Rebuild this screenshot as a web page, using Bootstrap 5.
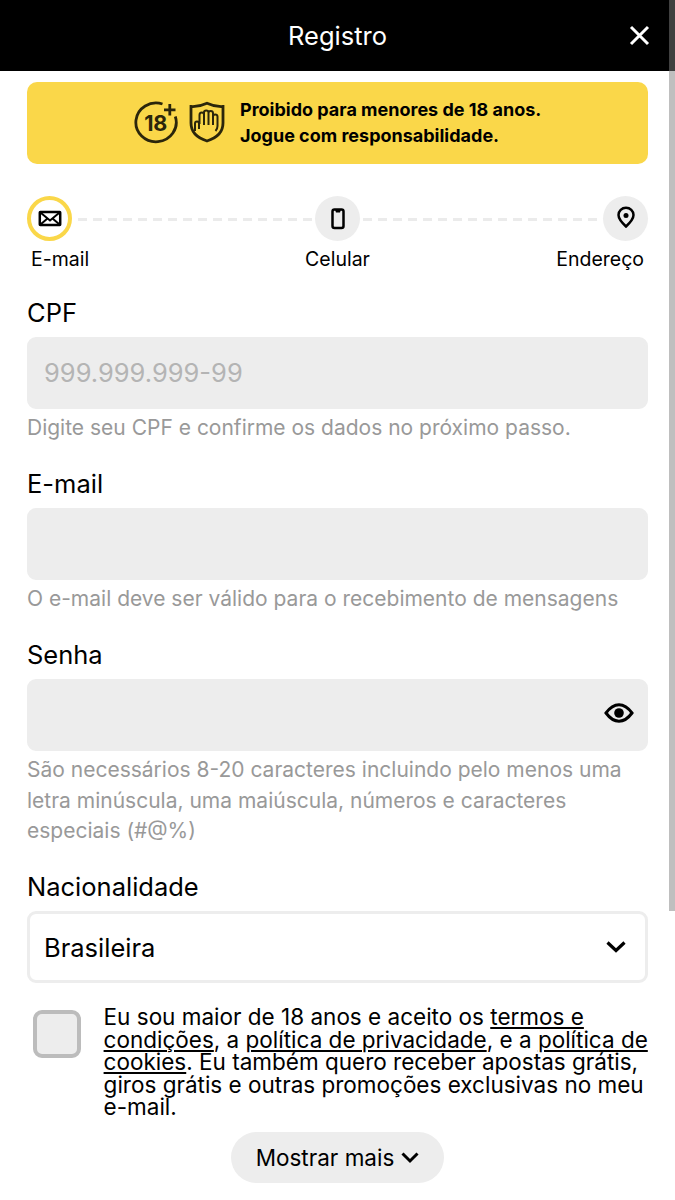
<!DOCTYPE html>
<html lang="pt-BR">
<head>
<meta charset="utf-8">
<meta name="viewport" content="width=device-width, initial-scale=1">
<title>Registro</title>
<link href="https://cdn.jsdelivr.net/npm/bootstrap@5.3.0/dist/css/bootstrap.min.css" rel="stylesheet">
<style>
body{font-family:Inter,sans-serif;color:#000;background:#fff;height:1200px;overflow:hidden;font-size:25.5px;line-height:30px}
.topbar{height:71px;background:#000;color:#fff;padding:0 25px}
.topbar h1{font-size:25.5px;line-height:30px;font-weight:400;padding-left:21px}
.page-body{padding:11px 27px 0}
.notice{height:82px;background:#fad749;border-radius:10px;padding-left:106px;gap:10px;font-size:18px;line-height:26px;font-weight:700}
.notice svg{margin-top:-2px}
.notice p{margin-left:5px}
.steps{height:45px;margin-top:32px}
.step-dot{width:45px;height:45px;background:#ededed;flex:none}
.step-dot.current{background:#fff;border:4px solid #fad749}
.step-line{height:3px;margin:1px 3px 0 6px;background:repeating-linear-gradient(90deg,#ebebeb 0 9px,transparent 9px 15px)}
.step-line.second{margin-left:3px;margin-right:6px}
.step-names{font-size:19.5px;line-height:24px;margin-top:6px;padding:0 4px}
.step-names span{flex:1 1 0}
.field-block{height:171px}
.field-block .form-label{height:41px;line-height:34px;margin:0}
.field-block .form-control{height:72px;border:3px solid #ededed;border-radius:9px;background:#ededed;font-size:25.5px;padding:0 14px 2px;color:#000;line-height:30px}
.field-block .form-control::placeholder{color:#b4b4b4;opacity:1}
.field-block .select-box{padding:2px 14px 0}
.hint{font-size:21px;line-height:30.5px;color:#999;margin-top:4px}
.eye-btn{right:14px;top:22px}
.arrow{right:21px;top:27px}
.consent-row{gap:22.6px;padding-left:6px;margin-top:23px}
.consent-row .form-check-input{width:48px;height:48px;border:4px solid #bcbcbc;border-radius:9px;background:#ededed;margin:4px 0 0;flex:none}
.consent-row label{font-size:22.5px;line-height:22.5px}
.consent-row a{color:#000;text-underline-offset:2px;text-decoration-thickness:2px}
.more-btn{width:213px;height:51px;border-radius:26px;background:#ededed;font-size:22.5px;color:#000;border:0;margin-top:13px;gap:7px;margin-left:204px;padding:2px 0 0}
.more-btn svg{margin-top:-1px}
.scroll-thumb{right:0;top:0;width:6px;height:911px;background:#bfbfbf}
.scroll-thumb::before{content:"";display:block;height:71px;background:#404040}
</style>
</head>
<body class="position-relative">
<header class="topbar d-flex align-items-center">
  <h1 class="m-0 flex-fill text-center">Registro</h1>
  <svg width="21" height="21" viewBox="0 0 21 21" fill="none" stroke="#fff" stroke-width="3"><path d="M2 2l17 17M19 2L2 19"/></svg>
</header>
<main class="page-body">
  <section class="notice d-flex align-items-center">
    <svg width="46" height="44" viewBox="0 0 46 44" fill="none" stroke="#2b260b" stroke-width="2.8"><path d="M29.500 4A20.200 19.400 0 1 0 42.300 16.500M36.800 4v11.500M31 9.800h11.500"/><text x="22.5" y="30.500" text-anchor="middle" font-size="21.5" font-weight="700" fill="#2b260b" stroke="none" letter-spacing="-.5">18</text></svg>
    <svg width="36" height="42" viewBox="0 0 36 42" fill="none" stroke="#2b260b" stroke-width="2.8"><path d="M18 2.200Q10 6 2 5.500V22Q2 35 18 40Q34 35 34 22V5.500Q26 6 18 2.200Z"/><path stroke-width="2" stroke-linejoin="round" d="M6 30V22.500q0-2 2-2t2 2V28M10.500 23V14q0-2.500 2.200-2.500T15 13.500V24M15 14V11.500q0-2 2.200-2t2.300 2V24M19.500 12q0-2 2.200-2t2.300 2V24M24 15.500q0-2 2.200-2t2.300 2V25q0 3-2 5"/></svg>
    <p class="mb-0">Proibido para menores de 18 anos.<br>Jogue com responsabilidade.</p>
  </section>
  <div class="steps d-flex align-items-center">
    <span class="step-dot current rounded-circle d-flex align-items-center justify-content-center"><svg width="24" height="18" viewBox="0 0 24 18" fill="none" stroke="#000" stroke-width="2.5"><rect x="1.800" y="2" width="20.400" height="13" rx=".5"/><path stroke-width="2" d="M3 3l9 7.500 9-7.500M3 14l6.500-5.500M21 14l-6.500-5.500"/></svg></span>
    <span class="step-line flex-fill"></span>
    <span class="step-dot rounded-circle d-flex align-items-center justify-content-center"><svg width="14" height="22" viewBox="0 0 14 22" fill="none" stroke="#000" stroke-width="2.5"><rect x="1.500" y="1.500" width="11" height="18.500" rx="2"/><path d="M4 1.500h6l-1 3H5z" fill="#000" stroke="none"/></svg></span>
    <span class="step-line second flex-fill"></span>
    <span class="step-dot rounded-circle d-flex align-items-center justify-content-center"><svg class="mb-1" width="18" height="22" viewBox="0 0 18 22" fill="none" stroke="#000" stroke-width="2.5"><path d="M9 20.500Q1.500 13.500 1.500 9a7.500 7.200 0 0 1 15 0Q16.500 13.500 9 20.500Z"/><circle cx="9" cy="9.500" r="2.500" fill="#000" stroke="none"/></svg></span>
  </div>
  <div class="step-names d-flex"><span>E-mail</span><span class="text-center">Celular</span><span class="text-end">Endereço</span></div>
  <form style="margin-top:25px">
    <div class="field-block">
      <label class="form-label" for="cpf">CPF</label>
      <input class="form-control" id="cpf" placeholder="999.999.999-99">
      <div class="hint">Digite seu CPF e confirme os dados no próximo passo.</div>
    </div>
    <div class="field-block">
      <label class="form-label" for="mail">E-mail</label>
      <input class="form-control" id="mail" type="email">
      <div class="hint">O e-mail deve ser válido para o recebimento de mensagens</div>
    </div>
    <div class="field-block" style="height:232px">
      <label class="form-label" for="pw">Senha</label>
      <div class="position-relative">
        <input class="form-control" id="pw" type="password">
        <svg class="eye-btn position-absolute" width="30" height="24" viewBox="0 0 30 24"><path d="M2 12Q8 3.800 15 3.800T28 12Q22 20.200 15 20.200T2 12Z" fill="none" stroke="#000" stroke-width="3"/><circle cx="15" cy="12" r="4.800"/></svg>
      </div>
      <div class="hint">São necessários 8-20 caracteres incluindo pelo menos uma<br>letra minúscula, uma maiúscula, números e caracteres<br>especiais (#@%)</div>
    </div>
    <div class="field-block" style="height:113px">
      <label class="form-label">Nacionalidade</label>
      <div class="position-relative">
        <div class="form-control select-box d-flex align-items-center bg-white">Brasileira</div>
        <svg class="arrow position-absolute" width="22" height="18" viewBox="0 0 22 18" fill="none" stroke="#000" stroke-width="3.2"><path d="M2.500 4.500l8.500 8 8.500-8"/></svg>
      </div>
    </div>
    <div class="consent-row d-flex align-items-start">
      <input class="form-check-input" type="checkbox" id="ok">
      <label for="ok" class="text-nowrap">Eu sou maior de 18 anos e aceito os <a href="#">termos e</a><br><a href="#">condições</a>, a <a href="#">política de privacidade</a>, e a <a href="#">política de</a><br><a href="#">cookies</a>. Eu também quero receber apostas grátis,<br>giros grátis e outras promoções exclusivas no meu<br>e-mail.</label>
    </div>
    <button type="button" class="more-btn btn d-flex align-items-center justify-content-center">Mostrar mais<svg width="18" height="14" viewBox="0 0 18 14" fill="none" stroke="#000" stroke-width="3"><path d="M1.500 2.500l7.500 7.500 7.500-7.500"/></svg></button>
  </form>
</main>
<div class="scroll-thumb position-absolute"></div>
<script src="https://cdn.jsdelivr.net/npm/bootstrap@5.3.0/dist/js/bootstrap.bundle.min.js"></script>
</body>
</html>
